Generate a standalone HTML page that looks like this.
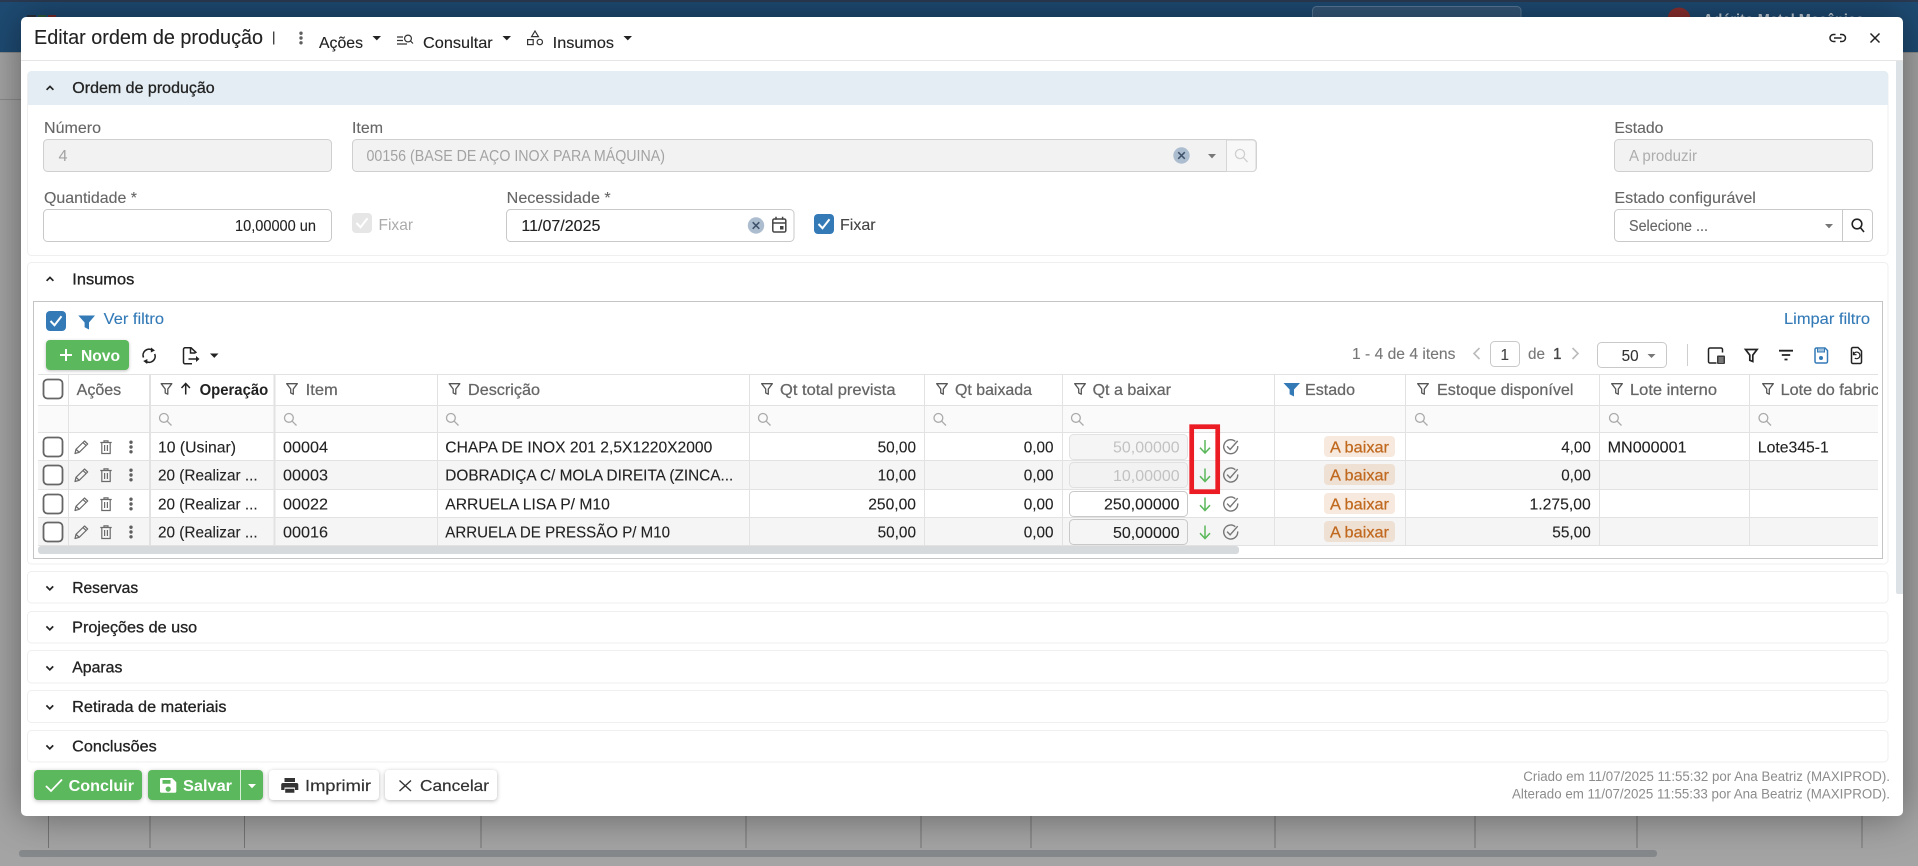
<!DOCTYPE html>
<html lang="pt-BR">
<head>
<meta charset="utf-8">
<title>Editar ordem de produção</title>
<style>
html,body{margin:0;padding:0;width:1918px;height:866px;overflow:hidden;background:#a4a4a4}
svg{position:absolute;left:0;top:0;display:block}
#modal{position:absolute;left:21px;top:17px;width:1882px;height:799px;background:#fff;border-radius:5px;box-shadow:0 0 40px rgba(0,0,0,.42)}
text{font-family:"Liberation Sans",Arial,sans-serif;font-size:16px;fill:#222;stroke:#222;stroke-width:.12;white-space:pre}
.l{fill:#666;stroke:#666}
.d{fill:#a3a3a3;stroke:none}
.h{fill:#666;stroke:#666;stroke-width:.25}
.m{stroke:#222;stroke-width:.3}
.w{fill:#fff;stroke:none;font-weight:bold}
.b{fill:#c0691f;stroke:#c0691f;stroke-width:.25}
.n{fill:#337ab7;stroke:#337ab7}
.g{fill:#777;stroke:#777}
.ft{font-size:13.5px;fill:#8c8c8c;stroke:none}
.p{fill:#fff;stroke:#efefef}
.i{fill:#fff;stroke:#c9c9c9}
.dis{fill:#f2f2f2;stroke:#cfcfcf}
.cb{fill:#fff;stroke:#666;stroke-width:1.8}
.ln{stroke:#e2e2e2;stroke-width:1;fill:none}
</style>
</head>
<body>
<svg width="1918" height="866" viewBox="0 0 1918 866">
  <rect x="0" y="0" width="1918" height="52" fill="#1e4b73"/>
  <rect x="0" y="0" width="1918" height="2" fill="#2b3a52"/>
  <rect x="0" y="52" width="1918" height="1" fill="#8a8a8a"/>
  <rect x="0" y="99" width="21" height="1" fill="#8c8c8c"/>
  <rect x="1312.5" y="6.5" width="208.5" height="30" rx="4" fill="#35587a" stroke="#5a7a99"/>
  <circle cx="1679" cy="19" r="11.5" fill="#8e2f2f"/>
  <rect x="27" y="15" width="9" height="5" fill="#2b2f38"/>
  <rect x="38" y="15" width="8" height="5" fill="#2f5a37"/>
  <rect x="48" y="15" width="8" height="5" fill="#7a2b2b"/>
  <text x="1703" y="25" style="fill:#c8d2dc;stroke:none;font-weight:bold" textLength="161" lengthAdjust="spacingAndGlyphs">Adérito Metal Mecânica</text>
  <g stroke="#747474" stroke-width="1">
    <path d="M48.5 816V848M150 816V848M244.5 816V848M481 816V848M746 816V848M921 816V848M1031 816V848M1275 816V848M1475 816V848M1637 816V848M1862 816V848"/>
  </g>
  <rect x="19" y="850" width="1638" height="7" rx="3" fill="#85898c"/>
</svg>
<div id="modal"></div>
<svg width="1918" height="866" viewBox="0 0 1918 866">
  <defs>
    <clipPath id="gridclip"><rect x="38" y="374" width="1840" height="182"/></clipPath>
    <symbol id="f" width="12" height="12" viewBox="0 0 12 12" overflow="visible"><path d="M.7.7h10.6L7.3 6v5.2L4.7 9.9V6z" fill="none" stroke="#555" stroke-width="1.3" stroke-linejoin="round"/></symbol>
    <symbol id="s" width="14" height="14" viewBox="0 0 14 14" overflow="visible"><g fill="none" stroke="#aaa" stroke-width="1.3"><circle cx="5.4" cy="5.4" r="4.4"/><path d="M8.6 8.6 13 13"/></g></symbol>
    <symbol id="p" width="15" height="14" viewBox="0 0 15 14" overflow="visible"><path d="M1 13.5l1-4.2L10.5 1l3.2 3L5.2 12.3zM9 2.6l3.2 3M2.2 9.5l3 2.8" fill="none" stroke="#6a6a6a" stroke-width="1.2" stroke-linejoin="round"/></symbol>
    <symbol id="t" width="12" height="14" viewBox="0 0 12 14" overflow="visible"><path d="M.3 2.5h11.4M4 2.5V.9h4v1.6M1.8 2.5v11h8.4v-11M4.6 5v6M7.4 5v6" fill="none" stroke="#6a6a6a" stroke-width="1.2"/></symbol>
    <symbol id="v" width="4" height="14" viewBox="0 0 4 14" overflow="visible"><g fill="#5f5f5f"><circle cx="2" cy="2.2" r="1.7"/><circle cx="2" cy="7" r="1.7"/><circle cx="2" cy="11.8" r="1.7"/></g></symbol>
    <g id="a"><path d="M0-6.5V6M-5 1.2 0 6.5 5 1.2" fill="none" stroke="#5cb85c" stroke-width="1.5"/></g>
    <g id="c"><path d="M4.6-5.3A7 7 0 1 0 7-.6" fill="none" stroke="#777" stroke-width="1.4"/><path d="M-3.6-.4-.6 2.8 7-5.8" fill="none" stroke="#777" stroke-width="1.4"/></g>
    <g id="up"><path d="M-3.4 1.8 0-1.6 3.4 1.8" fill="none" stroke="#222" stroke-width="1.7"/></g>
    <g id="dn"><path d="M-3.4-1.6 0 1.8 3.4-1.6" fill="none" stroke="#222" stroke-width="1.7"/></g>
    <g id="x"><circle r="8.2" fill="#adbdd0"/><path d="M-3.3-3.3 3.3 3.3M3.3-3.3-3.3 3.3" stroke="#3f5269" stroke-width="1.5"/></g>
    <g id="cb"><rect x="-9.5" y="-9.5" width="19" height="19" rx="4" class="cb"/></g>
  </defs>

  <!-- Header -->
  <text x="34" y="44" style="font-size:20px" textLength="229" lengthAdjust="spacingAndGlyphs">Editar ordem de produção</text>
  <rect x="273" y="31.5" width="1.4" height="13" fill="#444"/>
  <use href="#v" x="299" y="31"/>
  <text x="319" y="48" textLength="44" lengthAdjust="spacingAndGlyphs">Ações</text>
  <path d="M372.5 36h8.5l-4.2 4.4z" fill="#222"/>
  <g fill="none" stroke="#333" stroke-width="1.2"><path d="M397 37h6M397 40.5h6M397 44h10"/><circle cx="408" cy="38.5" r="3.4"/><path d="M410.5 41l2.5 2.5"/></g>
  <text x="423" y="48" textLength="69.7" lengthAdjust="spacingAndGlyphs">Consultar</text>
  <path d="M502.5 36h8.5l-4.2 4.4z" fill="#222"/>
  <g fill="none" stroke="#333" stroke-width="1.2"><path d="M535 31l3.4 5.6h-6.8z"/><rect x="527.6" y="39.6" width="5.6" height="5"/><circle cx="539.8" cy="42" r="2.7"/></g>
  <text x="552.7" y="48" textLength="61.3" lengthAdjust="spacingAndGlyphs">Insumos</text>
  <path d="M623.5 36h8.5l-4.2 4.4z" fill="#222"/>
  <g fill="none" stroke="#222" stroke-width="1.5"><path d="M1835.5 34.5h-2a3.5 3.5 0 0 0 0 7h2M1840 34.5h2a3.5 3.5 0 0 1 0 7h-2M1834 38h7.5"/></g>
  <path d="M1870.5 33.5 1879.5 42.5M1879.5 33.5 1870.5 42.5" stroke="#222" stroke-width="1.5"/>
  <rect x="21" y="60" width="1882" height="1" fill="#e5e5e5"/>

  <!-- Modal scrollbar -->
  <path d="M1896 61h7v533h-5a2 2 0 0 1-2-2z" fill="#dde2e6"/>

  <!-- Ordem de produção -->
  <rect x="27.5" y="71.5" width="1860.5" height="184" rx="4" class="p"/>
  <path d="M28 105V75a4 4 0 0 1 4-4h1852a4 4 0 0 1 4 4v30z" fill="#e3edf3"/>
  <use href="#up" x="50" y="88"/>
  <text x="72.3" y="93" class="m" textLength="142.4" lengthAdjust="spacingAndGlyphs">Ordem de produção</text>

  <text x="44" y="133" class="l" textLength="57" lengthAdjust="spacingAndGlyphs">Número</text>
  <rect x="43.5" y="139.5" width="288" height="32" rx="4" class="dis"/>
  <text x="58.5" y="161" class="d" textLength="9" lengthAdjust="spacingAndGlyphs">4</text>

  <text x="352" y="133" class="l" textLength="31" lengthAdjust="spacingAndGlyphs">Item</text>
  <rect x="352.5" y="139.5" width="904" height="32" rx="4" class="dis"/>
  <path d="M1226.5 140h26a3.5 3.5 0 0 1 3.5 3.5v24.5a3.5 3.5 0 0 1-3.5 3.5h-26z" fill="#f8f8f8" stroke="#d6d6d6"/>
  <text x="366.5" y="161" class="d" textLength="298.5" lengthAdjust="spacingAndGlyphs">00156 (BASE DE AÇO INOX PARA MÁQUINA)</text>
  <use href="#x" x="1181.5" y="155.5"/>
  <path d="M1208 154h8l-4 4.4z" fill="#777"/>
  <g fill="none" stroke="#d0d0d0" stroke-width="1.3"><circle cx="1240" cy="154" r="4.6"/><path d="M1243.4 157.6 1247.5 162"/></g>

  <text x="1614.4" y="133" class="l" textLength="49" lengthAdjust="spacingAndGlyphs">Estado</text>
  <rect x="1614.5" y="139.5" width="258" height="32" rx="4" class="dis"/>
  <text x="1629" y="161" style="fill:#adadad;stroke:none" textLength="68" lengthAdjust="spacingAndGlyphs">A produzir</text>

  <text x="44" y="203" class="l" textLength="93" lengthAdjust="spacingAndGlyphs">Quantidade *</text>
  <rect x="43.5" y="209.5" width="288" height="32" rx="4" class="i"/>
  <text x="235" y="231" textLength="81" lengthAdjust="spacingAndGlyphs">10,00000 un</text>

  <rect x="352" y="213" width="20" height="20" rx="4" fill="#e6e6e6"/>
  <path d="M356.5 223l4 4.2 7-9" fill="none" stroke="#fff" stroke-width="2"/>
  <text x="378.5" y="230" style="fill:#ababab;stroke:none" textLength="34.5" lengthAdjust="spacingAndGlyphs">Fixar</text>

  <text x="506.7" y="203" class="l" textLength="104" lengthAdjust="spacingAndGlyphs">Necessidade *</text>
  <rect x="506.5" y="209.5" width="287.5" height="32" rx="4" class="i"/>
  <text x="521.4" y="231" textLength="79" lengthAdjust="spacingAndGlyphs">11/07/2025</text>
  <use href="#x" x="756" y="225.5"/>
  <g fill="none" stroke="#444" stroke-width="1.5"><rect x="772.8" y="219" width="13" height="13" rx="1.5"/><path d="M772.8 223h13M776 216.8v3M782.6 216.8v3"/></g>
  <rect x="780" y="226" width="3.5" height="3.5" fill="#444"/>

  <rect x="814" y="214" width="20" height="20" rx="4" fill="#337ab7"/>
  <path d="M818.5 224l4 4.2 7-9" fill="none" stroke="#fff" stroke-width="2"/>
  <text x="840" y="230" style="fill:#444;stroke:#444" textLength="35.6" lengthAdjust="spacingAndGlyphs">Fixar</text>

  <text x="1614.4" y="203" class="l" textLength="141.5" lengthAdjust="spacingAndGlyphs">Estado configurável</text>
  <rect x="1614.5" y="209.5" width="258" height="32" rx="4" class="i"/>
  <path d="M1842.5 210V241" stroke="#c9c9c9"/>
  <text x="1629" y="231" class="l" textLength="79" lengthAdjust="spacingAndGlyphs">Selecione ...</text>
  <path d="M1825 224h8l-4 4.4z" fill="#777"/>
  <g fill="none" stroke="#222" stroke-width="1.6"><circle cx="1857" cy="224" r="4.8"/><path d="M1860.4 227.6 1864 232"/></g>

  <!-- Insumos -->
  <rect x="27.5" y="262.5" width="1860.5" height="301.5" rx="4" class="p"/>
  <use href="#up" x="50" y="279"/>
  <text x="72.3" y="284.5" class="m" textLength="62" lengthAdjust="spacingAndGlyphs">Insumos</text>
  <rect x="33.5" y="301.5" width="1849" height="257" fill="#fff" stroke="#c4c4c4"/>

  <rect x="46" y="311" width="20" height="20" rx="4" fill="#337ab7"/>
  <path d="M50.5 321l4 4.2 7-9" fill="none" stroke="#fff" stroke-width="2"/>
  <path d="M78.3 315.5H95l-6 7v7l-4.4-2.3v-4.7z" fill="#337ab7"/>
  <text x="103.7" y="324" class="n" textLength="60.3" lengthAdjust="spacingAndGlyphs">Ver filtro</text>
  <text x="1784" y="324" class="n" textLength="86" lengthAdjust="spacingAndGlyphs">Limpar filtro</text>

  <rect x="46" y="340" width="83" height="30" rx="4" fill="#5cb85c" style="filter:drop-shadow(0 1px 1.5px rgba(0,0,0,.25))"/>
  <path d="M66 349v12M60 355h12" stroke="#fff" stroke-width="2"/>
  <text x="81" y="361" class="w" textLength="39" lengthAdjust="spacingAndGlyphs">Novo</text>

  <g fill="none" stroke="#222" stroke-width="1.6"><path d="M143.5 357.5a6 6 0 0 1 8.7-7.4M154.7 354a6 6 0 0 1-8.7 7.4"/></g>
  <path d="M151 347.5l4 3-4.2 2zM147.2 364l-4-3 4.2-2z" fill="#222"/>
  <g fill="none" stroke="#222" stroke-width="1.5"><path d="M196 353v-0.5L191 347.8H185a1.5 1.5 0 0 0-1.5 1.5v13a1.5 1.5 0 0 0 1.5 1.5h7M190.5 348v5h5M188.5 359h9"/></g>
  <path d="M196 356l3.5 3-3.5 3z" fill="#222"/>
  <path d="M210 353.5h8.5l-4.2 4.4z" fill="#222"/>

  <text x="1352" y="359" class="g" textLength="103.4" lengthAdjust="spacingAndGlyphs">1 - 4 de 4 itens</text>
  <path d="M1479.5 348l-5.5 5.5 5.5 5.5" fill="none" stroke="#bbb" stroke-width="1.6"/>
  <rect x="1490.5" y="341.5" width="29" height="25" rx="4" class="i"/>
  <text x="1500.5" y="360" style="fill:#444;stroke:#444" textLength="8.5" lengthAdjust="spacingAndGlyphs">1</text>
  <text x="1528" y="359" class="g" textLength="17" lengthAdjust="spacingAndGlyphs">de</text>
  <text x="1553" y="359" style="fill:#444;stroke:#444;stroke-width:.3" textLength="8.5" lengthAdjust="spacingAndGlyphs">1</text>
  <path d="M1572.5 348l5.5 5.5-5.5 5.5" fill="none" stroke="#bbb" stroke-width="1.6"/>
  <rect x="1597.5" y="342.5" width="69" height="25" rx="4" class="i"/>
  <text x="1621.6" y="361" style="fill:#333;stroke:#333" textLength="17" lengthAdjust="spacingAndGlyphs">50</text>
  <path d="M1647.5 354h8l-4 4z" fill="#777"/>
  <path d="M1687.5 344V366" stroke="#cfcfcf"/>

  <g fill="none" stroke="#222" stroke-width="1.5">
    <path d="M1722.5 352.5v-3a1.5 1.5 0 0 0-1.5-1.5h-11a1.5 1.5 0 0 0-1.5 1.5v12a1.5 1.5 0 0 0 1.5 1.5h6.5"/>
    <path d="M1745.5 349.5h11.6l-4.3 5.6v6.4l-3-1.2v-5.2z" stroke-width="1.7"/>
    <path d="M1779 350.7h14M1781.8 355h8.4M1784.5 359.5h3" stroke-width="1.8"/>
    <path d="M1851.5 349a1.5 1.5 0 0 1 1.5-1.5h5l3.5 3.5v11a1.5 1.5 0 0 1-1.5 1.5h-7a1.5 1.5 0 0 1-1.5-1.5z"/>
    <path d="M1853.5 354.5a3.3 3.3 0 1 1 1.3 3.6M1853.5 351.7v3h3" stroke-width="1.2"/>
  </g>
  <rect x="1717" y="355.5" width="8" height="8.5" rx="1" fill="#3b3b3b"/>
  <path d="M1718.5 358h5M1718.5 360h5M1718.5 362h5" stroke="#ddd" stroke-width=".7"/>
  <g fill="none" stroke="#337ab7" stroke-width="1.5"><path d="M1815 349.5a1.5 1.5 0 0 1 1.5-1.5h8.5l2.5 2.5v11a1.5 1.5 0 0 1-1.5 1.5h-9.5a1.5 1.5 0 0 1-1.5-1.5z"/><path d="M1817.5 348.5v3.5h7v-3.5" fill="#9fc1de" stroke-width="1"/></g>
  <circle cx="1821" cy="358" r="2" fill="#337ab7"/>

  <!-- Grid -->
  <g clip-path="url(#gridclip)">
    <rect x="38" y="406" width="1840" height="26" fill="#fafafa"/>
    <rect x="38" y="461" width="1840" height="28" fill="#f5f5f5"/>
    <rect x="38" y="518" width="1840" height="28" fill="#f5f5f5"/>
    <path class="ln" d="M38 374.5H1878M38 405.5H1878M38 432.5H1878M38 460.5H1878M38 489.5H1878M38 517.5H1878M38 545.5H1878"/>
    <path class="ln" d="M68.5 374V546M437.5 374V546M749.5 374V546M924.5 374V546M1062.5 374V546M1274.5 374V546M1405.5 374V546M1599.5 374V546M1749.5 374V546"/>
    <path class="ln" style="stroke-width:2" d="M150 374V546M274.5 374V546"/>

    <use href="#cb" x="53" y="389"/>
    <text x="76.7" y="395" class="h" textLength="44.5" lengthAdjust="spacingAndGlyphs">Ações</text>
    <use href="#f" x="160.5" y="383"/>
    <path d="M185.7 394.5V384M181.5 388l4.2-4.5 4.2 4.5" fill="none" stroke="#222" stroke-width="1.5"/>
    <text x="199.6" y="395" style="font-weight:bold;fill:#222;stroke:none" textLength="68.6" lengthAdjust="spacingAndGlyphs">Operação</text>
    <use href="#f" x="286" y="383"/>
    <text x="305.7" y="395" class="h" textLength="32" lengthAdjust="spacingAndGlyphs">Item</text>
    <use href="#f" x="448.5" y="383"/>
    <text x="468" y="395" class="h" textLength="72" lengthAdjust="spacingAndGlyphs">Descrição</text>
    <use href="#f" x="761" y="383"/>
    <text x="780" y="395" class="h" textLength="115.5" lengthAdjust="spacingAndGlyphs">Qt total prevista</text>
    <use href="#f" x="936" y="383"/>
    <text x="955" y="395" class="h" textLength="77" lengthAdjust="spacingAndGlyphs">Qt baixada</text>
    <use href="#f" x="1074" y="383"/>
    <text x="1092.6" y="395" class="h" textLength="78.4" lengthAdjust="spacingAndGlyphs">Qt a baixar</text>
    <path d="M1283.5 383H1300l-6 6.5v7l-4.4-2.2v-4.8z" fill="#337ab7"/>
    <text x="1305" y="395" class="h" textLength="50" lengthAdjust="spacingAndGlyphs">Estado</text>
    <use href="#f" x="1417" y="383"/>
    <text x="1437" y="395" class="h" textLength="136.5" lengthAdjust="spacingAndGlyphs">Estoque disponível</text>
    <use href="#f" x="1611" y="383"/>
    <text x="1630" y="395" class="h" textLength="87" lengthAdjust="spacingAndGlyphs">Lote interno</text>
    <use href="#f" x="1762" y="383"/>
    <text x="1780.6" y="395" class="h" textLength="130" lengthAdjust="spacingAndGlyphs">Lote do fabricante</text>

    <use href="#s" x="158.5" y="412.5"/><use href="#s" x="283.5" y="412.5"/><use href="#s" x="445.5" y="412.5"/>
    <use href="#s" x="757.5" y="412.5"/><use href="#s" x="933" y="412.5"/><use href="#s" x="1070.5" y="412.5"/>
    <use href="#s" x="1414.5" y="412.5"/><use href="#s" x="1608.5" y="412.5"/><use href="#s" x="1758" y="412.5"/>

    <!-- Row actions -->
    <use href="#cb" x="53" y="447"/><use href="#p" x="74" y="440"/><use href="#t" x="100" y="440"/><use href="#v" x="129" y="440"/>
    <use href="#cb" x="53" y="475"/><use href="#p" x="74" y="468"/><use href="#t" x="100" y="468"/><use href="#v" x="129" y="468"/>
    <use href="#cb" x="53" y="504"/><use href="#p" x="74" y="497"/><use href="#t" x="100" y="497"/><use href="#v" x="129" y="497"/>
    <use href="#cb" x="53" y="532"/><use href="#p" x="74" y="525"/><use href="#t" x="100" y="525"/><use href="#v" x="129" y="525"/>

    <!-- Row 1 -->
    <text x="158" y="452.3" textLength="78" lengthAdjust="spacingAndGlyphs">10 (Usinar)</text>
    <text x="283" y="452.3" textLength="45" lengthAdjust="spacingAndGlyphs">00004</text>
    <text x="445.3" y="452.3" textLength="267" lengthAdjust="spacingAndGlyphs">CHAPA DE INOX 201 2,5X1220X2000</text>
    <text x="877.6" y="452.3" textLength="38.4" lengthAdjust="spacingAndGlyphs">50,00</text>
    <text x="1023.7" y="452.3" textLength="29.8" lengthAdjust="spacingAndGlyphs">0,00</text>
    <rect x="1069.5" y="434.5" width="118" height="25" rx="4" fill="#f5f5f5" stroke="#e2e2e2"/>
    <text x="1113" y="452.3" style="fill:#c2c2c2;stroke:none" textLength="66.6" lengthAdjust="spacingAndGlyphs">50,00000</text>
    <use href="#a" x="1205" y="446.5"/><use href="#c" x="1230.7" y="446.7"/>
    <rect x="1324" y="436" width="71" height="21" rx="4" fill="#f7e9dd"/>
    <text x="1330" y="452.3" class="b" textLength="59" lengthAdjust="spacingAndGlyphs">A baixar</text>
    <text x="1561.2" y="452.3" textLength="29.6" lengthAdjust="spacingAndGlyphs">4,00</text>
    <text x="1607.6" y="452.3" textLength="79" lengthAdjust="spacingAndGlyphs">MN000001</text>
    <text x="1757.8" y="452.3" textLength="71" lengthAdjust="spacingAndGlyphs">Lote345-1</text>

    <!-- Row 2 -->
    <text x="158" y="480.3" textLength="99.6" lengthAdjust="spacingAndGlyphs">20 (Realizar ...</text>
    <text x="283" y="480.3" textLength="45" lengthAdjust="spacingAndGlyphs">00003</text>
    <text x="445.3" y="480.3" textLength="288" lengthAdjust="spacingAndGlyphs">DOBRADIÇA C/ MOLA DIREITA (ZINCA...</text>
    <text x="877.6" y="480.3" textLength="38.4" lengthAdjust="spacingAndGlyphs">10,00</text>
    <text x="1023.7" y="480.3" textLength="29.8" lengthAdjust="spacingAndGlyphs">0,00</text>
    <rect x="1069.5" y="462.5" width="118" height="25" rx="4" fill="#f2f2f2" stroke="#e0e0e0"/>
    <text x="1113" y="481" style="fill:#c2c2c2;stroke:none" textLength="66.6" lengthAdjust="spacingAndGlyphs">10,00000</text>
    <use href="#a" x="1205" y="475"/><use href="#c" x="1230.7" y="475"/>
    <rect x="1324" y="464" width="71" height="21" rx="4" fill="#efe0d4"/>
    <text x="1330" y="480.3" class="b" textLength="59" lengthAdjust="spacingAndGlyphs">A baixar</text>
    <text x="1561.2" y="480.3" textLength="29.6" lengthAdjust="spacingAndGlyphs">0,00</text>

    <!-- Row 3 -->
    <text x="158" y="509.3" textLength="99.6" lengthAdjust="spacingAndGlyphs">20 (Realizar ...</text>
    <text x="283" y="509.3" textLength="45" lengthAdjust="spacingAndGlyphs">00022</text>
    <text x="445.3" y="509.3" textLength="164.5" lengthAdjust="spacingAndGlyphs">ARRUELA LISA P/ M10</text>
    <text x="868.2" y="509.3" textLength="47.8" lengthAdjust="spacingAndGlyphs">250,00</text>
    <text x="1023.7" y="509.3" textLength="29.8" lengthAdjust="spacingAndGlyphs">0,00</text>
    <rect x="1069.5" y="491.5" width="118" height="25" rx="4" fill="#fff" stroke="#c9c9c9"/>
    <text x="1104" y="509.3" textLength="75.5" lengthAdjust="spacingAndGlyphs">250,00000</text>
    <use href="#a" x="1205" y="504"/><use href="#c" x="1230.7" y="504"/>
    <rect x="1324" y="493" width="71" height="21" rx="4" fill="#f7e9dd"/>
    <text x="1330" y="509.3" class="b" textLength="59" lengthAdjust="spacingAndGlyphs">A baixar</text>
    <text x="1529.5" y="509.3" textLength="61.3" lengthAdjust="spacingAndGlyphs">1.275,00</text>

    <!-- Row 4 -->
    <text x="158" y="537.3" textLength="99.6" lengthAdjust="spacingAndGlyphs">20 (Realizar ...</text>
    <text x="283" y="537.3" textLength="45" lengthAdjust="spacingAndGlyphs">00016</text>
    <text x="445.3" y="537.3" textLength="224.7" lengthAdjust="spacingAndGlyphs">ARRUELA DE PRESSÃO P/ M10</text>
    <text x="877.6" y="537.3" textLength="38.4" lengthAdjust="spacingAndGlyphs">50,00</text>
    <text x="1023.7" y="537.3" textLength="29.8" lengthAdjust="spacingAndGlyphs">0,00</text>
    <rect x="1069.5" y="519.5" width="118" height="25" rx="4" fill="#f5f5f5" stroke="#c9c9c9"/>
    <text x="1113" y="538" textLength="66.6" lengthAdjust="spacingAndGlyphs">50,00000</text>
    <use href="#a" x="1205" y="532"/><use href="#c" x="1230.7" y="532"/>
    <rect x="1324" y="521" width="71" height="21" rx="4" fill="#efe0d4"/>
    <text x="1330" y="537.3" class="b" textLength="59" lengthAdjust="spacingAndGlyphs">A baixar</text>
    <text x="1552.3" y="537.3" textLength="38.5" lengthAdjust="spacingAndGlyphs">55,00</text>

    <rect x="38" y="546" width="1201" height="8" rx="3" fill="#d6dadd"/>
  </g>

  <!-- Red highlight -->
  <rect x="1191.7" y="426.7" width="26" height="65" fill="none" stroke="#ec1c24" stroke-width="4.7"/>

  <!-- Collapsed sections -->
  <rect x="27.5" y="571.5" width="1860.5" height="31.5" rx="4" class="p"/>
  <use href="#dn" x="49.8" y="588"/>
  <text x="72.2" y="593" class="m" textLength="66" lengthAdjust="spacingAndGlyphs">Reservas</text>
  <rect x="27.5" y="611.5" width="1860.5" height="31.5" rx="4" class="p"/>
  <use href="#dn" x="49.8" y="628"/>
  <text x="72.2" y="632.7" class="m" textLength="125" lengthAdjust="spacingAndGlyphs">Projeções de uso</text>
  <rect x="27.5" y="650.5" width="1860.5" height="32.5" rx="4" class="p"/>
  <use href="#dn" x="49.8" y="668"/>
  <text x="72.2" y="672.7" class="m" textLength="50.2" lengthAdjust="spacingAndGlyphs">Aparas</text>
  <rect x="27.5" y="690.5" width="1860.5" height="32" rx="4" class="p"/>
  <use href="#dn" x="49.8" y="707"/>
  <text x="72.2" y="712" class="m" textLength="154.3" lengthAdjust="spacingAndGlyphs">Retirada de materiais</text>
  <rect x="27.5" y="730.5" width="1860.5" height="31.5" rx="4" class="p"/>
  <use href="#dn" x="49.8" y="747"/>
  <text x="72.2" y="751.7" class="m" textLength="84.5" lengthAdjust="spacingAndGlyphs">Conclusões</text>

  <!-- Footer buttons -->
  <g style="filter:drop-shadow(0 1px 2px rgba(0,0,0,.28))">
    <rect x="34" y="770" width="108" height="30" rx="4" fill="#5cb85c"/>
    <rect x="148" y="770" width="115" height="30" rx="4" fill="#5cb85c"/>
    <rect x="269" y="770" width="110" height="30" rx="4" fill="#fff"/>
    <rect x="385" y="770" width="112" height="30" rx="4" fill="#fff"/>
  </g>
  <path d="M46 786l5 5 11-11.5" fill="none" stroke="#fff" stroke-width="1.8"/>
  <text x="68.6" y="791" class="w" textLength="65.4" lengthAdjust="spacingAndGlyphs">Concluir</text>
  <path d="M161.5 778h10.5l4.3 4.2v9a1.5 1.5 0 0 1-1.5 1.5h-13.3a1.5 1.5 0 0 1-1.5-1.5v-12.2a1.5 1.5 0 0 1 1.5-1zM162.5 780v3.8h8V780zM168.2 786.5a2.6 2.6 0 1 0 .01 0z" fill="#fff" fill-rule="evenodd"/>
  <text x="183" y="791" class="w" textLength="49" lengthAdjust="spacingAndGlyphs">Salvar</text>
  <path d="M240.5 770v30" stroke="#d6efd6"/>
  <path d="M248 784h8l-4 4.2z" fill="#fff"/>
  <path d="M284.5 778h10.5v4h-10.5zM283 783h13.5a1.8 1.8 0 0 1 1.8 1.8v5.2h-3.3v-2.5h-10.5v2.5h-3.3v-5.2a1.8 1.8 0 0 1 1.8-1.8zM285.2 788.7h9.2v4h-9.2z" fill="#333"/>
  <text x="305" y="791" style="fill:#333;stroke:#333;stroke-width:.2" textLength="66" lengthAdjust="spacingAndGlyphs">Imprimir</text>
  <path d="M399.5 780.5 411 791M411 780.5 399.5 791" stroke="#333" stroke-width="1.4"/>
  <text x="420" y="791" style="fill:#333;stroke:#333;stroke-width:.2" textLength="69" lengthAdjust="spacingAndGlyphs">Cancelar</text>

  <text x="1523.3" y="781" class="ft" textLength="366.7" lengthAdjust="spacingAndGlyphs">Criado em 11/07/2025 11:55:32 por Ana Beatriz (MAXIPROD).</text>
  <text x="1512" y="798.3" class="ft" textLength="378" lengthAdjust="spacingAndGlyphs">Alterado em 11/07/2025 11:55:33 por Ana Beatriz (MAXIPROD).</text>
</svg>
</body>
</html>
